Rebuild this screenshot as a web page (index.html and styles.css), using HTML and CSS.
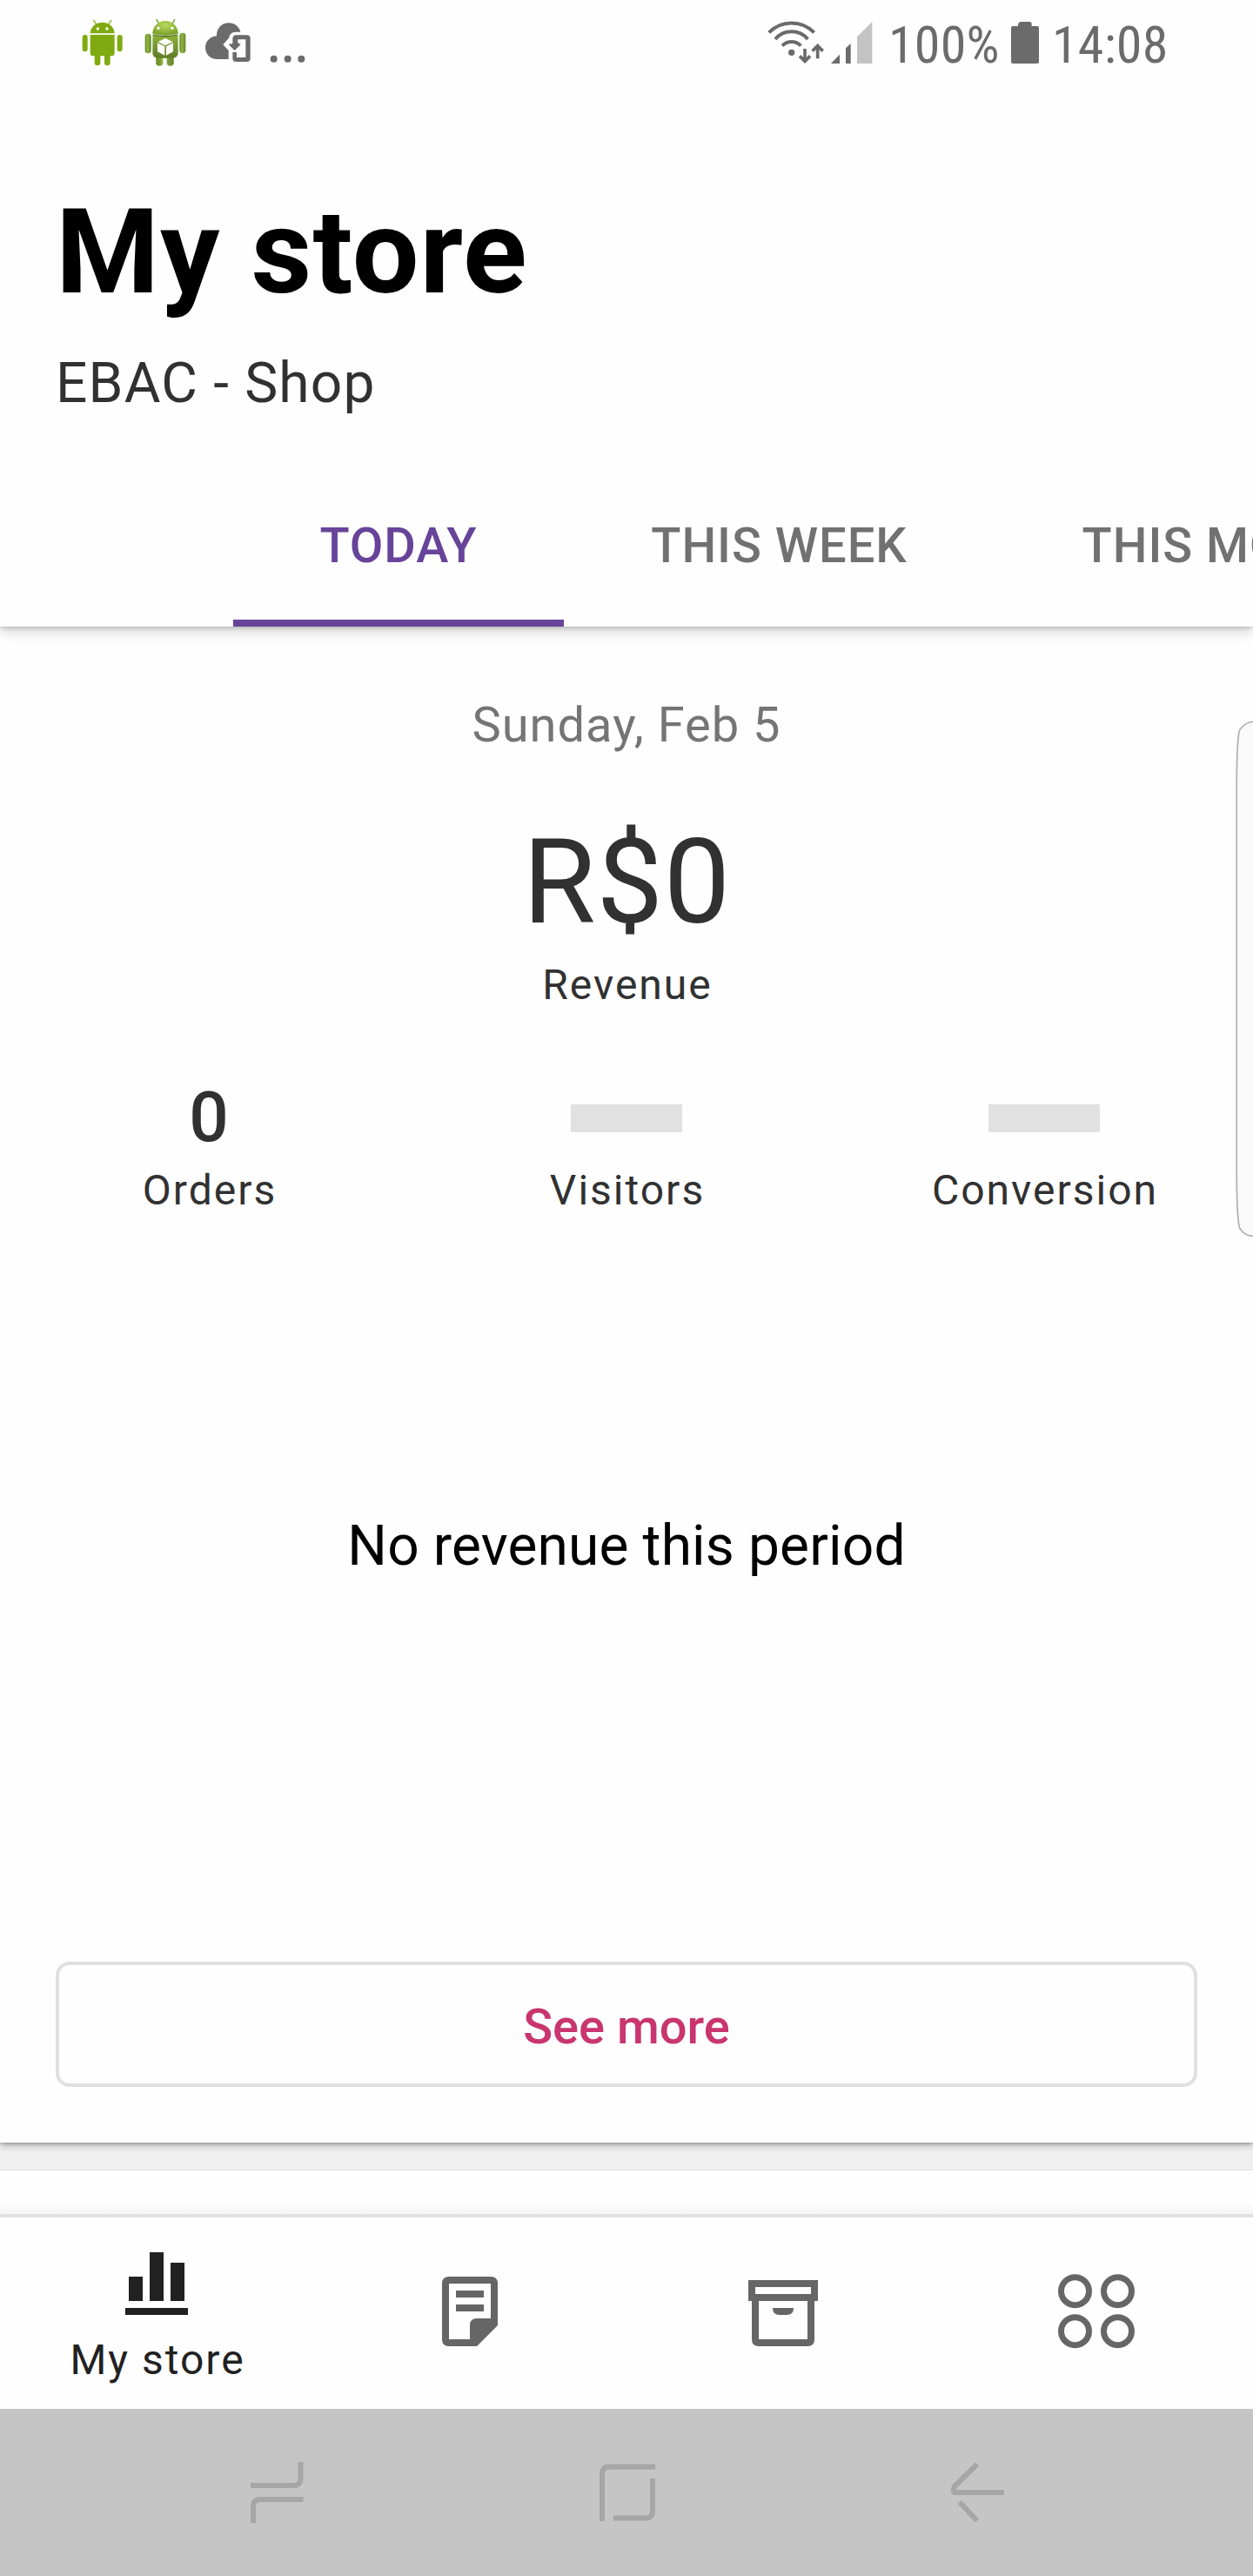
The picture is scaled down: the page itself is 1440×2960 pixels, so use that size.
FILE: index.html
```html
<!DOCTYPE html>
<html lang="en">
<head>
<meta charset="utf-8">
<title>My store</title>
<link rel="stylesheet" href="styles.css">
</head>
<body>
<div class="screen">
  <div class="status-bar">
    <div class="status-left">
      <svg width="50" height="100" viewBox="100 0 150 300">
        <g fill="#80ab10">
          <path d="M132 115C133 93 151 77 174 77S215 93 216 115Z"/>
          <path d="M144 70L153 84M204 70L195 84" stroke="#80ab10" stroke-width="4" stroke-linecap="round"/>
          <path d="M132 120H216V182Q216 193 205 193H201V216a10 10 0 0 1-20 0V193h-14V216a10 10 0 0 1-20 0V193h-4Q132 193 132 182Z"/>
          <rect x="105" y="120" width="18" height="58" rx="9"/>
          <rect x="225" y="120" width="18" height="58" rx="9"/>
        </g>
        <circle cx="158" cy="99" r="5" fill="#fff"/><circle cx="190" cy="99" r="5" fill="#fff"/>
      </svg>
      <svg class="package" width="50" height="100" viewBox="316 0 150 300">
        <defs>
          <radialGradient id="head" cx="50%" cy="30%" r="75%"><stop offset="0" stop-color="#b9d95c"/><stop offset="1" stop-color="#739a26"/></radialGradient>
          <linearGradient id="torso" x1="0" y1="0" x2="0" y2="1"><stop offset="0" stop-color="#8db33a"/><stop offset="1" stop-color="#5f7c26"/></linearGradient>
          <linearGradient id="limb" x1="0" y1="0" x2="1" y2="0"><stop offset="0" stop-color="#5f8520"/><stop offset=".4" stop-color="#91b842"/><stop offset="1" stop-color="#62822a"/></linearGradient>
        </defs>
        <path d="M361 68L369 82M423 68L415 82" stroke="#82a836" stroke-width="5" stroke-linecap="round"/>
        <path d="M359 190H383V221Q371 234 359 221ZM396 190H420V221Q408 234 396 221Z" fill="url(#limb)"/>
        <rect x="321" y="116" width="21" height="68" rx="10" fill="url(#limb)"/>
        <rect x="440" y="113" width="21" height="70" rx="10" fill="url(#limb)"/>
        <path d="M347 121Q391 129 435 121V183Q435 200 414 200H368Q347 200 347 183Z" fill="url(#torso)"/>
        <path d="M347 116C347 92 366 72 391 72S435 92 435 116Q391 128 347 116Z" fill="url(#head)"/>
        <path d="M348 120Q391 130 434 120" fill="none" stroke="#44591c" stroke-width="3"/>
        <circle cx="367" cy="97" r="5" fill="#fff"/><circle cx="415" cy="97" r="5" fill="#fff"/>
        <path d="M391 132L417 144L391 157L366 144ZM364 148L389 160V191L364 178ZM418 148L394 160V191L418 178Z" fill="#fff"/>
      </svg>
      <svg class="cloud" width="54" height="100" viewBox="526 0 162 300">
        <path fill="#6b6b6b" d="M609 204H569C546 204 529 186 529 164S546 126 568 124C568 98 585 79 610 79C629 79 645 91 650 110H634Q613 110 611 130L590 154L609 174Z"/>
        <path fill="#6b6b6b" fill-rule="evenodd" d="M636 121H672Q684 121 684 133V201Q684 213 672 213H635Q623 213 623 201V180H637V198H668V136H641V148L651 153L630 174L609 153L623 150V134Q623 121 636 121Z"/>
      </svg>
      <svg class="more" width="42" height="100" viewBox="752 0 126 300" fill="#6b6b6b"><circle cx="766" cy="203" r="12"/><circle cx="814" cy="203" r="12"/><circle cx="861" cy="203" r="12"/></svg>
    </div>
    <div class="status-right">
      <svg width="124" height="100" viewBox="60 0 372 300">
        <g fill="none" stroke="#6b6b6b" stroke-width="12">
          <path d="M68 112A109 109 0 0 1 224 112"/>
          <path d="M90 135A73 73 0 0 1 202 135"/>
          <path d="M114 158A44 44 0 0 1 178 158"/>
          <path d="M192 168V208M174 193L192 211L210 193M236 202V160M218 176L236 158L254 176" stroke-width="11"/>
        </g>
        <g fill="#6b6b6b"><circle cx="146" cy="181" r="11"/><path d="M282 219L312 188V219ZM333 219V166L350 150V219Z"/></g>
        <path fill="#c3c3c3" d="M372 219V127L424 75V219Z"/>
      </svg>
      <span class="status-text percent">100%</span>
      <svg width="32" height="100" viewBox="900 0 96 300"><path fill="#6b6b6b" d="M906 90H924V83Q926 75 934 75H963Q971 75 971 83V90H990Q996 90 996 96V213Q996 219 990 219H906Q900 219 900 213V96Q900 90 906 90Z"/></svg>
      <span class="status-text clock">14:08</span>
    </div>
  </div>

  <header class="header">
    <h1 class="title">My store</h1>
    <p class="subtitle">EBAC - Shop</p>
    <nav class="tabs">
      <a class="tab tab-today active">TODAY</a>
      <a class="tab tab-week">THIS WEEK</a>
      <a class="tab tab-month">THIS MONTH</a>
    </nav>
  </header>

  <main class="content">
    <section class="card">
      <div class="date">Sunday, Feb 5</div>
      <div class="revenue">R$0</div>
      <div class="label">Revenue</div>
      <div class="stats">
        <div class="stat"><div class="value">0</div><div class="label">Orders</div></div>
        <div class="stat"><div class="value"><span class="skeleton"></span></div><div class="label">Visitors</div></div>
        <div class="stat"><div class="value"><span class="skeleton"></span></div><div class="label">Conversion</div></div>
      </div>
      <div class="empty">No revenue this period</div>
      <a class="see-more">See more</a>
    </section>
    <section class="next-card"></section>
    <svg class="edge-handle" width="20" height="596" viewBox="0 0 20 596"><path d="M22 2.5Q12 2 6 10Q4 12 3.500 17Q1.200 34 1.200 84V512Q1.200 562 3.500 579Q4 584 6 586Q12 594 22 593.500" fill="#fafafa" stroke="#b0b0b0" stroke-width="1.700"/></svg>
  </main>

  <nav class="bottom-nav">
    <a class="nav-item selected">
      <svg width="96" height="96" viewBox="0 0 24 24" fill="#212121"><path d="M4 10h4v7H4zM10 3h4v14h-4zM16 6h4v11h-4zM3 19h18v2H3z"/></svg>
      <span class="nav-label">My store</span>
    </a>
    <a class="nav-item">
      <svg width="96" height="96" viewBox="0 0 24 24" fill="#666"><path fill-rule="evenodd" d="M6 2H18Q20 2 20 4V16L14 22H6Q4 22 4 20V4Q4 2 6 2ZM6 4V20H12V16Q12 14 14 14H18V4ZM8 6H16V8H8ZM8 10H16V12H8Z"/></svg>
    </a>
    <a class="nav-item">
      <svg width="96" height="96" viewBox="0 0 24 24" fill="#666"><path fill-rule="evenodd" d="M2 3H22V9H21V20Q21 22 19 22H5Q3 22 3 20V9H2ZM4 5V7H20V5ZM5 9V20H19V9ZM9 11H15Q15 13 13 13H11Q9 13 9 11Z"/></svg>
    </a>
    <a class="nav-item">
      <svg width="96" height="96" viewBox="0 0 96 96" fill="none" stroke="#666" stroke-width="7"><circle cx="23.500" cy="24.700" r="16"/><circle cx="72.500" cy="24.700" r="16"/><circle cx="23.500" cy="70.700" r="16"/><circle cx="72.500" cy="70.700" r="16"/></svg>
    </a>
  </nav>

  <footer class="system-nav">
    <svg width="64" height="72" viewBox="286 2828 64 72"><path d="M288 2856H338Q345.500 2856 345.500 2847V2829M291 2899V2881Q291 2872 298.500 2872H348.500"/></svg>
    <svg width="68" height="72" viewBox="686 2828 68 72"><path d="M691 2897V2843Q691 2834.500 699 2834.500H752M749 2848V2885Q749 2893.500 741 2893.500H704"/></svg>
    <svg width="64" height="72" viewBox="1092 2828 64 72"><path d="M1123 2831.500L1097 2857Q1094 2864 1098 2864H1154M1102.500 2875L1123 2896.500"/></svg>
  </footer>
</div>
</body>
</html>
```
FILE: styles.css
```css
* { box-sizing: border-box; }
body { margin: 0; background: #fefefe; font-family: Roboto, sans-serif; }
svg { display: block; flex: none; }

.screen { width: 1440px; height: 2960px; display: flex; flex-direction: column; overflow: hidden; background: #fefefe; }

.status-bar { position: relative; z-index: 3; height: 100px; flex: none; display: flex; justify-content: space-between; padding: 0 100px 0 93px; background: #fefefe; }
.status-left, .status-right { display: flex; }
.package { margin-left: 22px; }
.cloud { margin-left: 20px; }
.more { margin-left: 21px; }
.status-text { font-family: "Roboto Condensed", Roboto, sans-serif; font-size: 60px; line-height: 103px; letter-spacing: .2px; color: #6b6b6b; white-space: nowrap; }
.percent { width: 127px; margin: 0 14px 0 16px; }
.clock { width: 131px; margin-left: 15px; }

.header { position: relative; z-index: 2; height: 620px; flex: none; padding-top: 110px; background: #fefefe; box-shadow: 0 6px 14px rgba(0, 0, 0, .17), 0 1px 5px rgba(0, 0, 0, .2); clip-path: inset(0 0 -30px 0); }
.title { margin: 0; padding-left: 64px; font-size: 136px; line-height: 160px; font-weight: 700; letter-spacing: 1.050px; color: #000; }
.subtitle { margin: 31px 0 0; padding-left: 64px; font-size: 64px; line-height: 80px; letter-spacing: 1.200px; color: #313131; }
.tabs { display: flex; height: 186px; margin-top: 53px; padding-left: 268px; overflow: hidden; }
.tab { flex: none; display: flex; align-items: center; justify-content: center; border-bottom: 8px solid transparent; padding-top: 8px; font-size: 56px; line-height: 64px; font-weight: 500; letter-spacing: 1px; color: #717171; white-space: nowrap; }
.tab-today { width: 380px; }
.tab-week { width: 495px; }
.tab-month { width: 549px; }
.active { color: #674399; border-color: #674399; }

.content { position: relative; height: 1824px; flex: none; background: #f0f0f0; }
.card { position: relative; z-index: 1; height: 1742px; padding: 81px 64px 0; background: #fefefe; box-shadow: 0 3px 8px rgba(0, 0, 0, .3), 0 1px 3px rgba(0, 0, 0, .2); text-align: center; color: #313131; }
.date { font-size: 56px; line-height: 64px; letter-spacing: 1px; color: #757575; }
.revenue { margin-top: 69px; font-size: 136px; line-height: 160px; letter-spacing: .9px; text-indent: 1px; }
.label { margin-top: 10px; font-size: 48px; line-height: 56px; letter-spacing: 2px; text-indent: 2px; }
.stats { display: flex; margin: 76px -64px 0; }
.stat { width: 480px; }
.stat .label { margin-top: 8px; }
.value { display: flex; height: 96px; align-items: center; justify-content: center; font-size: 80px; line-height: 96px; font-weight: 500; }
.skeleton { width: 128px; height: 32px; margin-top: 2px; background: #e1e1e1; }
.empty { margin-top: 341px; font-size: 64px; line-height: 80px; letter-spacing: .15px; color: #000; }
.see-more { display: flex; align-items: center; justify-content: center; height: 144px; margin-top: 437px; padding-top: 6px; border: 4px solid #e0e0e0; border-radius: 16px; font-size: 56px; font-weight: 500; color: #c9356e; }
.next-card { height: 50px; margin-top: 32px; background: linear-gradient(#fefefe 70%, #f6f6f6); box-shadow: 0 -1px 1px rgba(0, 0, 0, .05); }
.edge-handle { position: absolute; z-index: 2; right: 0; top: 107px; }

.bottom-nav { position: relative; z-index: 2; display: flex; height: 224px; flex: none; border-top: 4px solid #e1e1e1; background: #fefefe; }
.nav-item { width: 360px; display: flex; flex-direction: column; align-items: center; justify-content: center; padding-bottom: 4px; }
.selected { justify-content: flex-start; padding: 28px 0 0; }
.nav-label { margin-top: 12px; font-size: 48px; line-height: 56px; letter-spacing: 2px; text-indent: 2px; color: #212121; }

.system-nav { height: 192px; flex: none; display: flex; justify-content: space-between; align-items: center; padding: 0 284px 0 286px; background: #c5c5c5; }
.system-nav path { fill: none; stroke: #a6a6a6; stroke-width: 6; }
```
